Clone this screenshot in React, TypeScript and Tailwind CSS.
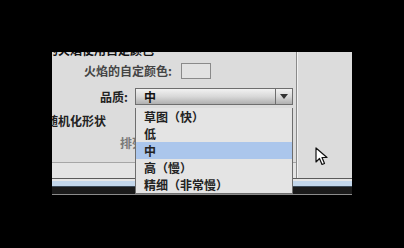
import React from 'react';

const cjk = { fontFamily: '"Noto Sans CJK SC", "Noto Sans", sans-serif' };

const items = ['草图（快）', '低', '中', '高（慢）', '精细（非常慢）'];

function Cursor() {
  return (
    <svg width="14" height="19" viewBox="0 0 14 19" className="absolute left-[315px] top-[147px]">
      <path d="M1 1 L1 15 L4.5 11.5 L7 17.5 L9.5 16.5 L7 10.5 L12 10.5 Z" fill="#fff" stroke="#111" strokeWidth="1.2" strokeLinejoin="round" />
    </svg>
  );
}

export default function App() {
  return (
    <div className="relative w-[404px] h-[248px] bg-black overflow-hidden" style={cjk}>
      <div className="ml-[52px] mt-[52px] w-[300px] flex flex-col overflow-hidden">
        {/* main area */}
        <div className="flex h-[126px]">
          <div className="w-[244px] flex flex-col bg-[#dcdcdc]">
            <div className="relative h-[110px] text-[12px] leading-[16px] text-[#111]">
              <div className="-mt-[10px] -ml-[6px] h-[16px] font-bold">的火焰使用自定颜色</div>
              <div className="flex items-center mt-[5px] h-[16px]">
                <span className="w-[120px] text-right text-[#444] font-bold">火焰的自定颜色:</span>
                <span className="ml-[9px] w-[30px] h-[16px] border border-[#8a8a8a] bg-[#e2e2e2]" />
              </div>
              <div className="flex items-center mt-[9px] h-[17px]">
                <span className="w-[76px] text-right font-bold text-[#222]">品质:</span>
                <div className="ml-[7px] w-[158px] h-[17px] flex border border-[#6e6e6e] bg-gradient-to-b from-[#f2f2f2] via-[#d8d8d8] to-[#b0b0b0]">
                  <span className="flex-1 pl-[8px] leading-[15px] font-bold">中</span>
                  <span className="w-[17px] border-l border-[#6e6e6e] flex items-center justify-center">
                    <svg width="8" height="5" viewBox="0 0 8 5"><path d="M0 0 H8 L4 5 Z" fill="#333" /></svg>
                  </span>
                </div>
              </div>
              <div className="mt-[8px] -ml-[6px] h-[16px] font-bold text-[#222]">随机化形状</div>
              <div className="mt-[6px] ml-[68px] h-[16px] text-[#7a7a7a] font-bold">排列</div>

              {/* open dropdown list */}
              <div className="absolute left-[83px] top-[56px] w-[158px] bg-[#e4e4e4] border-x border-b border-[#6e6e6e] z-10">
                {items.map((t, i) => (
                  <div
                    key={t}
                    className={`h-[17px] pl-[8px] leading-[17px] font-bold text-[#222] ${i === 2 ? 'bg-[#abc6ec]' : ''}`}
                  >
                    {t}
                  </div>
                ))}
              </div>
            </div>
            <div className="h-[1px] bg-[#a6a6a6]" />
            <div className="flex-1 bg-[#e4e4e4]" />
          </div>
          <div className="w-[1px] bg-[#8a8a8a]" />
          <div className="w-[1px] bg-[#f2f2f2]" />
          <div className="flex-1 bg-[#dcdcdc]" />
        </div>
        {/* bottom bands */}
        <div className="h-[1px] bg-[#5a5a5a]" />
        <div className="h-[2px] bg-[#e6e6e6]" />
        <div className="h-[5px] bg-[#c3d6ea]" />
        <div className="h-[1px] bg-[#3c4a58]" />
        <div className="h-[7px] bg-[#1a1a1a]" />
        <div className="h-[1px] bg-[#8c8c8c]" />
      </div>
      <Cursor />
    </div>
  );
}
